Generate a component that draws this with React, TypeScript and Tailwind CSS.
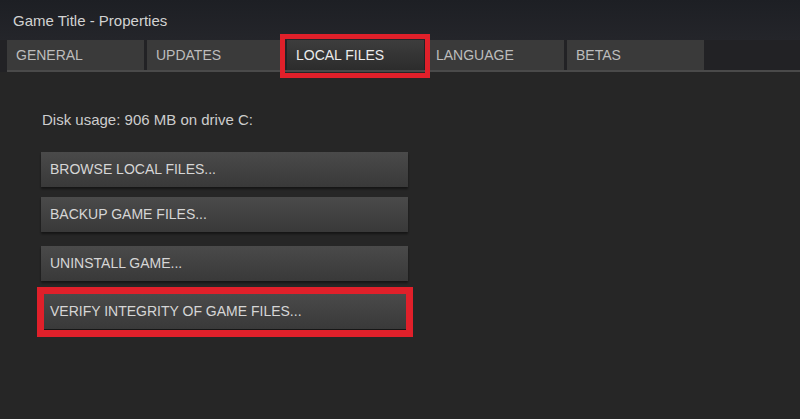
import React from 'react';

const tabs = ['GENERAL', 'UPDATES', 'LOCAL FILES', 'LANGUAGE', 'BETAS'];

const ActionButton: React.FC<{ label: string; className?: string }> = ({ label, className = '' }) => (
  <button
    className={`flex items-center w-[367px] h-[35px] pl-[9px] bg-gradient-to-b from-[#4a4a4a] to-[#393939] text-[14px] text-[#d6d6d6] shadow-[0_2px_2px_rgba(0,0,0,0.45)] ${className}`}
  >
    {label}
  </button>
);

export default function App() {
  return (
    <div className="relative w-[800px] h-[419px] overflow-hidden bg-[#262626] font-['Liberation_Sans',Arial,sans-serif]">
      {/* Title bar */}
      <div className="h-[40px] bg-gradient-to-b from-[#1d1f24] to-[#24252a] pl-[13px] pt-[10px] text-[15px] text-[#d2d2d2]">
        Game Title - Properties
      </div>

      {/* Tabs */}
      <div className="bg-[#222225] pl-[7px]">
        <div className="flex gap-[3px] h-[30px]">
          {tabs.map((t) => (
            <div
              key={t}
              className={`w-[137px] flex items-center pl-[9px] text-[14px] ${
                t === 'LOCAL FILES'
                  ? 'bg-gradient-to-b from-[#3d3d3d] to-[#2c2c2c] text-[#ececec]'
                  : 'bg-[#3a3a3a] text-[#bdbdbd]'
              }`}
            >
              {t}
            </div>
          ))}
        </div>
        <div className="h-[2px] bg-[#4a4a4a]" />
      </div>

      {/* Content */}
      <div className="pl-[41px] pt-[37px]">
        <div className="pl-[1px] text-[15px] text-[#cdcdcd]">Disk usage: 906 MB on drive C:</div>
        <ActionButton label="BROWSE LOCAL FILES..." className="mt-[20px]" />
        <ActionButton label="BACKUP GAME FILES..." className="mt-[10px]" />
        <ActionButton label="UNINSTALL GAME..." className="mt-[14px]" />
        <ActionButton label="VERIFY INTEGRITY OF GAME FILES..." className="mt-[13px]" />
      </div>

      {/* Red highlight annotations */}
      <div className="absolute left-[280px] top-[34px] w-[150px] h-[44px] border-[5px] border-[#e0202a]" />
      <div className="absolute left-[37px] top-[287px] w-[376px] h-[50px] border-[7px] border-[#e0202a]" />
    </div>
  );
}
